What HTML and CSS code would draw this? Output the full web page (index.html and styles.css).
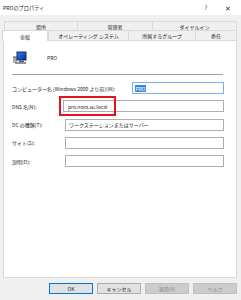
FILE: index.html
```html
<!DOCTYPE html>
<html lang="ja">
<head>
<meta charset="utf-8">
<title>PROのプロパティ</title>
<link rel="stylesheet" href="styles.css">
</head>
<body>
<div class="dialog">
  <div class="titlebar">
    <span class="title">PROのプロパティ</span>
    <span class="tb-btns"><span class="tb-help">?</span><span class="tb-close">✕</span></span>
  </div>
  <div class="tabs">
    <div class="tabrow back">
      <div class="tab w74">場所</div>
      <div class="tab w75">管理者</div>
      <div class="tab grow">ダイヤルイン</div>
    </div>
    <div class="tabrow front">
      <div class="tab sel">全般</div>
      <div class="tab w80">オペレーティング システム</div>
      <div class="tab w67">所属するグループ</div>
      <div class="tab grow">委任</div>
    </div>
  </div>
  <div class="panel">
    <div class="head">
      <svg class="pc" width="14" height="13" viewBox="0 0 14 13">
        <defs>
          <linearGradient id="scr" x1="0" y1="0" x2="1" y2="1">
            <stop offset="0" stop-color="#2a7cf0"/>
            <stop offset="1" stop-color="#0b2f9c"/>
          </linearGradient>
        </defs>
        <rect x="0" y="5" width="4" height="7" fill="#a8adb5"/>
        <rect x="0.5" y="6" width="3" height="1" fill="#6d737c"/>
        <rect x="3.5" y="0.5" width="10" height="9" fill="#1d2b5e"/>
        <rect x="4.5" y="1.5" width="8" height="7" fill="url(#scr)"/>
        <rect x="6" y="9.5" width="5" height="1.5" fill="#5a6270"/>
        <rect x="2" y="11" width="11" height="2" fill="#8d939c"/>
      </svg>
      <span class="name">PRO</span>
    </div>
    <div class="sep"></div>
    <div class="form">
      <div class="row wide">
        <span class="lbl">コンピューター名 (Windows 2000 より前)(W):</span>
        <div class="inp focus short"><span class="selected">PRO</span></div>
      </div>
      <div class="row">
        <span class="lbl">DNS 名(N):</span>
        <div class="inp dns">pro.nora.su.local<span class="mark"></span></div>
      </div>
      <div class="row">
        <span class="lbl">DC の種類(T):</span>
        <div class="inp">ワークステーションまたはサーバー</div>
      </div>
      <div class="row">
        <span class="lbl">サイト(S):</span>
        <div class="inp"></div>
      </div>
      <div class="row">
        <span class="lbl">説明(D):</span>
        <div class="inp"></div>
      </div>
    </div>
  </div>
  <div class="buttons">
    <div class="btn default">OK</div>
    <div class="btn">キャンセル</div>
    <div class="btn disabled">適用(A)</div>
    <div class="btn disabled">ヘルプ</div>
  </div>
</div>
</body>
</html>
```
FILE: styles.css
```css
* { box-sizing: border-box; }
html, body { margin: 0; padding: 0; }
body {
  width: 241px;
  height: 300px;
  background: #f0f0f0;
  font-family: "Noto Sans CJK JP", "Noto Sans", sans-serif;
  font-size: 5px;
  color: #1e1e1e;
  overflow: hidden;
}
.dialog { width: 241px; height: 300px; display: flex; flex-direction: column; }
.titlebar {
  height: 15px;
  background: #ffffff;
  display: flex;
  align-items: center;
  justify-content: space-between;
  padding: 0 0 0 3px;
}
.title { font-size: 5.2px; line-height: 1; }
.tb-btns { display: flex; align-items: center; }
.tb-help { width: 22px; text-align: center; font-size: 6px; color: #333; }
.tb-close { width: 22px; text-align: center; font-size: 7px; color: #333; margin-right: 2px; }

.tabs { margin-top: 6px; padding: 0 4px 0 4px; }
.tabrow { display: flex; height: 10px; }
.tabrow.back { height: 9px; }
.tab {
  border: 1px solid #d9d9d9;
  border-bottom: none;
  background: #f0f0f0;
  display: flex;
  align-items: center;
  justify-content: center;
  line-height: 1;
  white-space: nowrap;
  margin-left: -1px;
}
.tab:first-child { margin-left: 0; }
.w74 { width: 74px; }
.w75 { width: 76px; }
.w80 { width: 81px; }
.w67 { width: 68px; }
.grow { flex: 1; }
.tab.sel {
  width: 46px;
  margin: 0 0 -1px -2px;
  height: 11px;
  background: #ffffff;
  position: relative;
  z-index: 1;
}
.front .tab.sel + .tab { margin-left: 0; }

.panel {
  margin: 0 4px 0 3px;
  height: 238px;
  background: #ffffff;
  border: 1px solid #d9d9d9;
  padding: 10px 12px 0 8px;
}
.head { display: flex; align-items: center; height: 13px; }
.pc { display: block; margin-left: 1px; }
.name { margin-left: 20px; font-size: 5px; }
.sep { height: 1px; background: #a0a0a0; margin: 10px 1px 0 0; }

.form { display: flex; flex-direction: column; gap: 6.25px; margin-top: 7px; }
.row { display: flex; align-items: center; height: 12px; }
.lbl { width: 53px; flex: none; white-space: nowrap; line-height: 1; }
.row.wide .lbl { width: auto; flex: 1; }
.inp {
  flex: 1;
  height: 12px;
  border: 1px solid #adadad;
  background: #ffffff;
  display: flex;
  align-items: center;
  padding-left: 3px;
  white-space: nowrap;
  line-height: 1;
  position: relative;
}
.inp.short { flex: none; width: 92px; padding-left: 2px; }
.inp.focus { border-color: #7ab3ea; }
.selected { background: #3b86dc; color: #ffffff; padding: 1px 0.5px; }
.inp.dns { margin-left: -2px; padding-left: 4px; }
.mark {
  position: absolute;
  left: -5px;
  top: -5px;
  width: 57px;
  height: 20px;
  border: 2.5px solid #e8121d;
}

.buttons {
  display: flex;
  justify-content: flex-end;
  gap: 4px;
  padding: 0 4px 0 0;
  margin-top: 5px;
}
.btn {
  width: 44px;
  height: 11px;
  background: #e1e1e1;
  border: 1px solid #adadad;
  display: flex;
  align-items: center;
  justify-content: center;
  line-height: 1;
}
.btn.default { border-color: #0078d7; }
.btn.disabled { background: #cccccc; border-color: #bfbfbf; color: #8a8a8a; }
```
